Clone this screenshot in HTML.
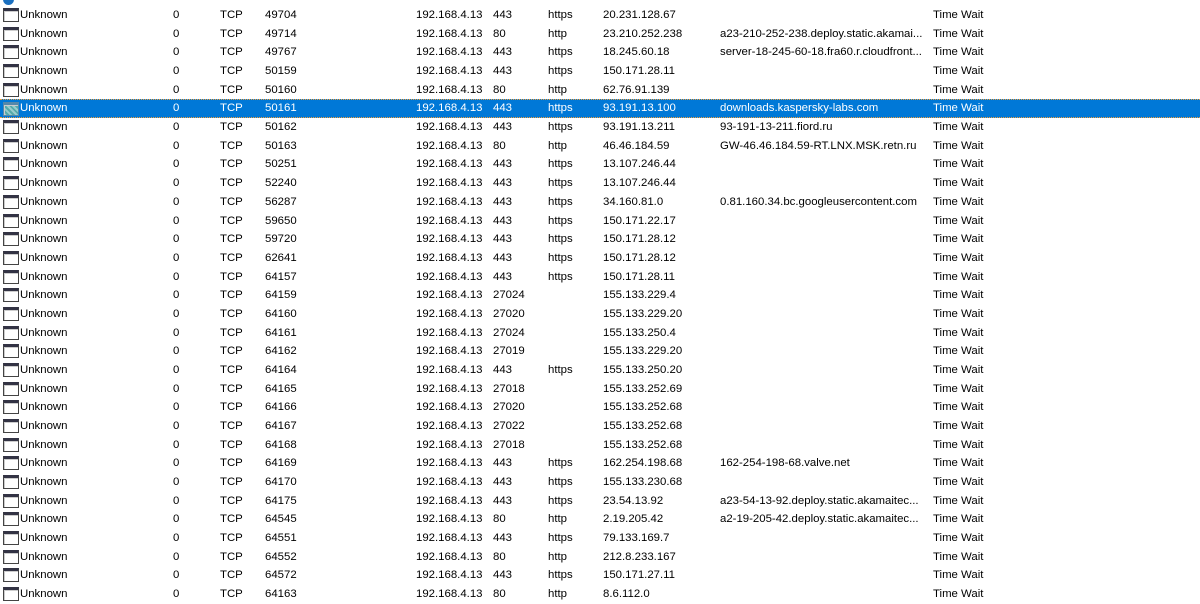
<!DOCTYPE html><html><head><style>
body{margin:0;width:1200px;height:604px;overflow:hidden;background:#fff;font-family:"Liberation Sans",sans-serif;font-size:11.4px;color:#000;position:relative}
.r{position:absolute;left:0;width:1200px;height:18px;line-height:18px;white-space:nowrap}
.r span{position:absolute;top:0}
.s{background:#0078d7;color:#fff;border-top:1px dotted #f0a040;border-bottom:1px dotted #f0a040;height:17px;line-height:17px}
.i{left:3px;top:2px!important;width:16px;height:14px;border:1px solid #444;box-sizing:border-box;border-top:3px solid #334;background:#fff;box-shadow:inset 1px 1px 0 #ccc}
.s .i{background:repeating-linear-gradient(45deg,#9cc 0 2px,#5aa 2px 4px);border-color:#5588aa}
</style></head><body>
<div style="position:absolute;left:3px;top:-6px;width:11px;height:11px;border-radius:50%;background:#1a6fc0"></div>
<div id="t"></div>
<script>
var d=[["49704","443","https","20.231.128.67",""],["49714","80","http","23.210.252.238","a23-210-252-238.deploy.static.akamai..."],["49767","443","https","18.245.60.18","server-18-245-60-18.fra60.r.cloudfront..."],["50159","443","https","150.171.28.11",""],["50160","80","http","62.76.91.139",""],["50161","443","https","93.191.13.100","downloads.kaspersky-labs.com"],["50162","443","https","93.191.13.211","93-191-13-211.fiord.ru"],["50163","80","http","46.46.184.59","GW-46.46.184.59-RT.LNX.MSK.retn.ru"],["50251","443","https","13.107.246.44",""],["52240","443","https","13.107.246.44",""],["56287","443","https","34.160.81.0","0.81.160.34.bc.googleusercontent.com"],["59650","443","https","150.171.22.17",""],["59720","443","https","150.171.28.12",""],["62641","443","https","150.171.28.12",""],["64157","443","https","150.171.28.11",""],["64159","27024","","155.133.229.4",""],["64160","27020","","155.133.229.20",""],["64161","27024","","155.133.250.4",""],["64162","27019","","155.133.229.20",""],["64164","443","https","155.133.250.20",""],["64165","27018","","155.133.252.69",""],["64166","27020","","155.133.252.68",""],["64167","27022","","155.133.252.68",""],["64168","27018","","155.133.252.68",""],["64169","443","https","162.254.198.68","162-254-198-68.valve.net"],["64170","443","https","155.133.230.68",""],["64175","443","https","23.54.13.92","a23-54-13-92.deploy.static.akamaitec..."],["64545","80","http","2.19.205.42","a2-19-205-42.deploy.static.akamaitec..."],["64551","443","https","79.133.169.7",""],["64552","80","http","212.8.233.167",""],["64572","443","https","150.171.27.11",""],["64163","80","http","8.6.112.0",""]];
var h="";d.forEach(function(r,i){var t=6+i*18.68;h+='<div class="r'+(i==5?' s':'')+'" style="top:'+t.toFixed(1)+'px"><span class="i"></span><span style="left:20px">Unknown</span><span style="left:173px">0</span><span style="left:220px">TCP</span><span style="left:265px">'+r[0]+'</span><span style="left:416px">192.168.4.13</span><span style="left:493px">'+r[1]+'</span><span style="left:548px">'+r[2]+'</span><span style="left:603px">'+r[3]+'</span><span style="left:720px">'+r[4]+'</span><span style="left:933px">Time Wait</span></div>'});
document.getElementById("t").innerHTML=h;
</script></body></html>
